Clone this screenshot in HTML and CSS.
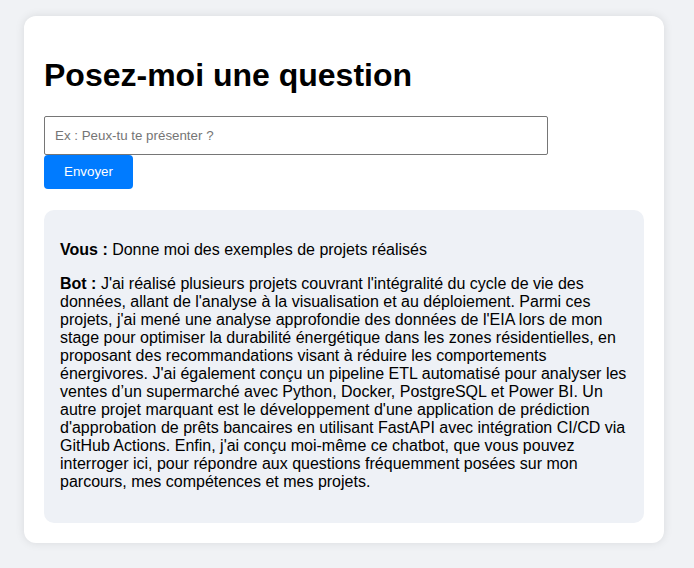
FILE: index.html
```html
<!DOCTYPE html>
<html lang="fr">
<head>
<meta charset="utf-8">
<title>Posez-moi une question</title>
<link rel="stylesheet" href="styles.css">
</head>
<body>
<div class="card">
  <h1 class="title">Posez-moi une question</h1>
  <div class="form">
    <input class="field" type="text" placeholder="Ex : Peux-tu te présenter ?">
    <button class="send" type="button">Envoyer</button>
  </div>
  <div class="chat">
    <p class="msg"><strong>Vous :</strong> Donne moi des exemples de projets réalisés</p>
    <p class="msg"><strong>Bot :</strong> J'ai réalisé plusieurs projets couvrant l'intégralité du cycle de vie des données, allant de l'analyse à la visualisation et au déploiement. Parmi ces projets, j'ai mené une analyse approfondie des données de l'EIA lors de mon stage pour optimiser la durabilité énergétique dans les zones résidentielles, en proposant des recommandations visant à réduire les comportements énergivores. J'ai également conçu un pipeline ETL automatisé pour analyser les ventes d’un supermarché avec Python, Docker, PostgreSQL et Power BI. Un autre projet marquant est le développement d'une application de prédiction d'approbation de prêts bancaires en utilisant FastAPI avec intégration CI/CD via GitHub Actions. Enfin, j'ai conçu moi-même ce chatbot, que vous pouvez interroger ici, pour répondre aux questions fréquemment posées sur mon parcours, mes compétences et mes projets.</p>
  </div>
</div>
</body>
</html>
```
FILE: styles.css
```css
html, body {
  margin: 0;
  padding: 0;
}
body {
  background: #f0f2f5;
  font-family: "Liberation Sans", Arial, sans-serif;
  color: #000;
  padding: 16px 24px;
}
.card {
  width: 640px;
  box-sizing: border-box;
  background: #fff;
  border-radius: 12px;
  padding: 20px;
  box-shadow: 0 0 10px rgba(0, 0, 0, 0.1);
}
.title {
  font-size: 32px;
  font-weight: bold;
  margin: 21.44px 0;
}
.form {
  display: flex;
  flex-direction: column;
  align-items: flex-start;
}
.field {
  box-sizing: border-box;
  width: 504px;
  height: 39px;
  padding: 0 10px;
  border: 1px solid #767676;
  border-radius: 2px;
  font-family: "Liberation Sans", Arial, sans-serif;
  font-size: 13.333px;
  color: #000;
  background: #fff;
  margin: 0;
}
.field::placeholder {
  color: #757575;
}
.send {
  box-sizing: border-box;
  height: 34px;
  padding: 0 20px;
  margin: 0;
  border: none;
  border-radius: 4px;
  background: #007bff;
  color: #fff;
  font-family: "Liberation Sans", Arial, sans-serif;
  font-size: 13.333px;
  cursor: pointer;
}
.chat {
  margin-top: 21px;
  background: #eef1f6;
  border-radius: 10px;
  padding: 15px 16px 16px;
  font-size: 16px;
}
.msg {
  margin: 16px 0;
}
```
